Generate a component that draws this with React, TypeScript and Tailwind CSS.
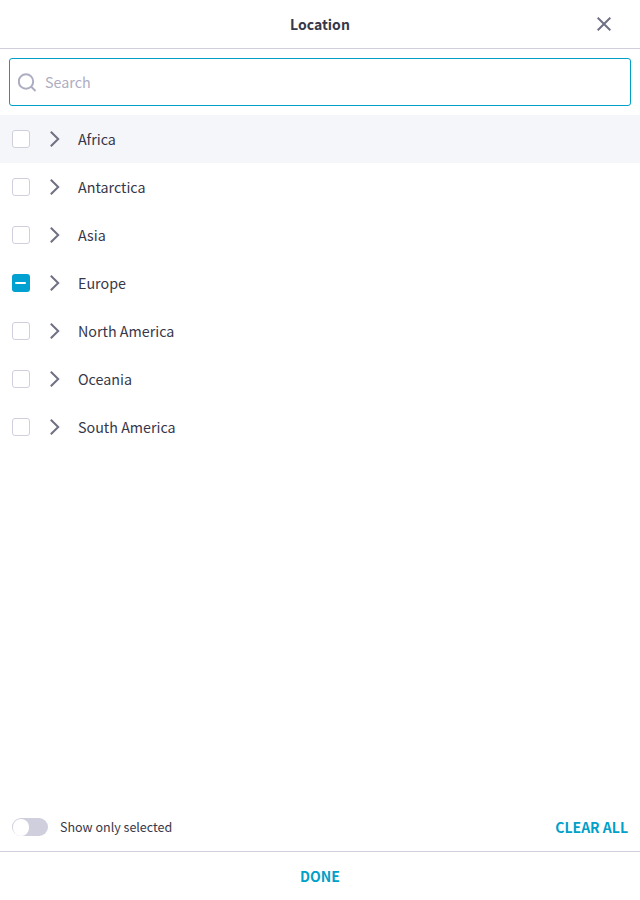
type CheckState = "off" | "mixed";

const regions: { name: string; state: CheckState; active?: boolean }[] = [
  { name: "Africa", state: "off", active: true },
  { name: "Antarctica", state: "off" },
  { name: "Asia", state: "off" },
  { name: "Europe", state: "mixed" },
  { name: "North America", state: "off" },
  { name: "Oceania", state: "off" },
  { name: "South America", state: "off" },
];

function Checkbox({ state }: { state: CheckState }) {
  if (state === "mixed") {
    return (
      <span role="checkbox" aria-checked="mixed" className="flex size-[18px] items-center justify-center rounded-[3px] bg-[#00a0d0] pr-px">
        <span className="h-0.5 w-[11px] rounded-[1px] bg-white" />
      </span>
    );
  }
  return <span role="checkbox" aria-checked="false" className="size-[18px] rounded-[3px] border border-[#cfcfdd] bg-white" />;
}

function Chevron() {
  return (
    <svg className="ml-5 h-[18px] w-[10px]" viewBox="0 0 10 18" fill="none" stroke="#6f7083" strokeWidth="2">
      <path d="M0.8 1.7 8.2 9 0.8 16.3" />
    </svg>
  );
}

export default function App() {
  return (
    <div className="flex h-[900px] w-full flex-col bg-white font-['Noto_Sans_CJK_SC',sans-serif] text-[14.3px] text-[#373749]">
      <header className="grid h-[49px] grid-cols-[1fr_auto_1fr] items-center border-b border-[#cfcfdd]">
        <h1 className="col-start-2 text-sm font-bold">Location</h1>
        <button aria-label="Close" className="mr-[29px] justify-self-end">
          <svg className="size-[14px]" viewBox="0 0 14 14" fill="none" stroke="#6f7083" strokeWidth="2">
            <path d="M0.7 0.7 13.3 13.3M13.3 0.7 0.7 13.3" />
          </svg>
        </button>
      </header>

      <div className="p-[9px]">
        <label className="flex h-12 items-center rounded-[3px] border border-[#00a0c8] pl-2">
          <svg className="size-[19px]" viewBox="0 0 19 19" fill="none" stroke="#adadc2" strokeWidth="2">
            <circle cx="8" cy="8.5" r="7.2" />
            <path d="M13 13.5 17.5 18" />
          </svg>
          <input placeholder="Search" className="ml-2 flex-1 outline-none placeholder:text-[#adadc2] placeholder:opacity-100" />
        </label>
      </div>

      <ul className="flex-1">
        {regions.map((r) => (
          <li key={r.name} className={r.active ? "flex h-12 items-center bg-[#f4f6fa] pl-3" : "flex h-12 items-center pl-3"}>
            <Checkbox state={r.state} />
            <Chevron />
            <span className="ml-[18px]">{r.name}</span>
          </li>
        ))}
      </ul>

      <div className="flex h-12 items-center px-3">
        <span role="switch" aria-checked="false" className="flex h-[18px] w-9 items-center rounded-full bg-[#cfcfdd] pl-[0.5px]">
          <span className="h-[17px] w-[16.5px] rounded-full bg-white" />
        </span>
        <span className="ml-3 text-[12.53px]">Show only selected</span>
        <button className="ml-auto text-sm font-bold text-[#00a0c8]">CLEAR ALL</button>
      </div>
      <footer className="flex h-[49px] items-center justify-center border-t border-[#cfcfdd]">
        <button className="text-sm font-bold text-[#00a0c8]">DONE</button>
      </footer>
    </div>
  );
}
